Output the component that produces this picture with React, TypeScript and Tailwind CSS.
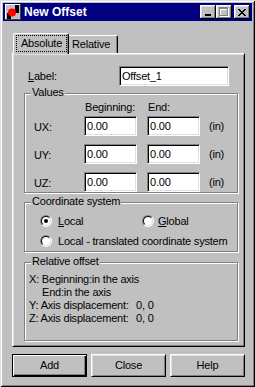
import React from "react";

function TitleBtn({ children }: { children: React.ReactNode }) {
  return (
    <div className="w-[16px] h-[14px] bg-[#c0c0c0] shadow-[inset_-1px_-1px_#000,inset_1px_1px_#fff,inset_-2px_-2px_#808080,inset_2px_2px_#dfdfdf]">
      <svg width="16" height="14" viewBox="0 0 16 14" shapeRendering="crispEdges" className="block">
        {children}
      </svg>
    </div>
  );
}

function AppIcon() {
  return (
    <svg width="16" height="16" viewBox="0 0 16 16" shapeRendering="crispEdges" className="block">
      <rect x="0" y="0" width="16" height="16" fill="#c0c0c0" />
      <rect x="0" y="0" width="16" height="1" fill="#fff" />
      <rect x="0" y="0" width="1" height="16" fill="#fff" />
      <rect x="0" y="15" width="16" height="1" fill="#404040" />
      <rect x="15" y="0" width="1" height="16" fill="#404040" />
      <rect x="10" y="1" width="4" height="8" fill="#000" />
      <rect x="2" y="9" width="4" height="6" fill="#000" />
      <circle cx="7" cy="8.5" r="4" fill="#ff0000" shapeRendering="auto" />
    </svg>
  );
}

function Field({ w, children }: { w: string; children?: React.ReactNode }) {
  return (
    <div
      className={
        "h-[20px] bg-white border border-t-[#808080] border-l-[#808080] border-r-white border-b-white shadow-[inset_1px_1px_#000,inset_-1px_-1px_#dfdfdf] flex items-center pl-[2px] " +
        w
      }
    >
      {children}
    </div>
  );
}

function Group({
  title,
  className,
  children,
}: {
  title: string;
  className: string;
  children?: React.ReactNode;
}) {
  return (
    <div className={"relative border border-[#808080] shadow-[inset_1px_1px_#fff,1px_1px_#fff] " + className}>
      <span className="absolute left-[6px] top-[-8px] bg-[#c0c0c0] px-[1px] whitespace-nowrap">{title}</span>
      {children}
    </div>
  );
}

function Radio({ checked }: { checked?: boolean }) {
  return (
    <span className="w-[12px] h-[12px] shrink-0 rounded-full border border-t-[#808080] border-l-[#808080] border-r-white border-b-white flex">
      <span className="flex-1 rounded-full border border-t-black border-l-black border-r-[#dfdfdf] border-b-[#dfdfdf] bg-white flex items-center justify-center">
        {checked && <span className="w-[4px] h-[4px] rounded-full bg-black" />}
      </span>
    </span>
  );
}

function Btn({ children, def }: { children: React.ReactNode; def?: boolean }) {
  return (
    <div
      className={
        "w-[75px] h-[23px] flex items-center justify-center pb-[1px] " +
        (def
          ? "border border-black shadow-[inset_1px_1px_#fff,inset_-1px_-1px_#000,inset_-2px_-2px_#808080]"
          : "border border-t-white border-l-white border-r-black border-b-black shadow-[inset_1px_1px_#dfdfdf,inset_-1px_-1px_#808080]")
      }
    >
      {children}
    </div>
  );
}

function ValueRow({ label, first }: { label: string; first?: boolean }) {
  return (
    <div className={"flex items-center h-[20px] pl-[9px] " + (first ? "mt-[2px]" : "mt-[8px]")}>
      <span className="w-[50px] pt-[2px]">{label}</span>
      <Field w="w-[53px]">0.00</Field>
      <div className="ml-[10px]">
        <Field w="w-[53px]">0.00</Field>
      </div>
      <span className="ml-[9px] pt-[1px]">(in)</span>
    </div>
  );
}

export default function App() {
  return (
    <div className="w-[255px] h-[387px] bg-[#c0c0c0] text-black text-[11px] leading-[13px] tracking-[-0.2px] font-['Liberation_Sans',Arial,sans-serif] p-[3px] shadow-[inset_1px_1px_#dfdfdf,inset_-1px_-1px_#000,inset_2px_2px_#fff,inset_-2px_-2px_#808080] flex flex-col">
      {/* Title bar */}
      <div className="h-[18px] bg-[#000080] flex items-center pl-[2px] pr-[2px] shrink-0">
        <AppIcon />
        <span className="ml-[3px] text-white font-bold text-[12px] tracking-normal">New Offset</span>
        <div className="ml-auto flex items-center">
          <TitleBtn>
            <rect x="5" y="9" width="6" height="2" fill="#000" />
          </TitleBtn>
          <TitleBtn>
            <g fill="#fff">
              <rect x="4" y="3" width="9" height="2" />
              <rect x="4" y="3" width="1" height="9" />
              <rect x="12" y="3" width="1" height="9" />
              <rect x="4" y="11" width="9" height="1" />
            </g>
            <g fill="#808080">
              <rect x="3" y="2" width="9" height="2" />
              <rect x="3" y="2" width="1" height="9" />
              <rect x="11" y="2" width="1" height="9" />
              <rect x="3" y="10" width="9" height="1" />
            </g>
          </TitleBtn>
          <div className="w-[2px]" />
          <TitleBtn>
            <g fill="#000">
              <rect x="4" y="4" width="2" height="1" />
              <rect x="10" y="4" width="2" height="1" />
              <rect x="5" y="5" width="2" height="1" />
              <rect x="9" y="5" width="2" height="1" />
              <rect x="6" y="6" width="4" height="1" />
              <rect x="7" y="7" width="2" height="1" />
              <rect x="6" y="8" width="4" height="1" />
              <rect x="5" y="9" width="2" height="1" />
              <rect x="9" y="9" width="2" height="1" />
              <rect x="4" y="10" width="2" height="1" />
              <rect x="10" y="10" width="2" height="1" />
            </g>
          </TitleBtn>
        </div>
      </div>

      {/* Body */}
      <div className="flex flex-col pl-[9px] pt-[12px]">
        {/* Tabs */}
        <div className="h-[20px] flex items-end ml-[1px]">
          <div className="relative z-10 w-[56px] h-[21px] -mb-[1px] bg-[#c0c0c0] rounded-t-[2px] border-l border-t border-r border-l-white border-t-white border-r-black shadow-[inset_-1px_0_#808080] pt-[1px] pl-[2px]">
            <div className="w-[51px] h-[17px] border border-dotted border-black flex items-center justify-center">
              Absolute
            </div>
          </div>
          <div className="w-[49px] h-[18px] rounded-tr-[2px] border-t border-r border-t-white border-r-black shadow-[inset_-1px_0_#808080] flex items-center pl-[3px] pb-[1px]">
            Relative
          </div>
        </div>

        {/* Panel */}
        <div className="w-[233px] h-[294px] border border-t-white border-l-white border-r-black border-b-black shadow-[inset_1px_1px_#dfdfdf,inset_-1px_-1px_#808080] flex flex-col">
          <div className="mt-[12px] ml-[15px] flex items-center h-[20px]">
            <span className="w-[91px]">
              <span className="underline">L</span>abel:
            </span>
            <Field w="w-[110px]">Offset_1</Field>
          </div>

          <Group title="Values" className="mt-[7px] ml-[11px] w-[214px] h-[100px]">
            <div className="mt-[7px] pl-[60px] flex">
              <span className="w-[63px]">Beginning:</span>
              <span>End:</span>
            </div>
            <ValueRow label="UX:" first />
            <ValueRow label="UY:" />
            <ValueRow label="UZ:" />
          </Group>

          <Group title="Coordinate system" className="mt-[9px] ml-[11px] w-[214px] h-[50px]">
            <div className="mt-[10px] flex items-center h-[16px] pl-[15px]">
              <div className="w-[102px] flex items-center">
                <Radio checked />
                <span className="ml-[6px]">
                  <span className="underline">L</span>ocal
                </span>
              </div>
              <Radio />
              <span className="ml-[4px]">
                <span className="underline">G</span>lobal
              </span>
            </div>
            <div className="mt-[4px] flex items-center h-[16px] pl-[15px]">
              <Radio />
              <span className="ml-[6px] whitespace-nowrap">Local - translated coordinate system</span>
            </div>
          </Group>

          <Group title="Relative offset" className="mt-[10px] ml-[11px] w-[214px] h-[79px]">
            <div className="pt-[10px] pl-[4px] flex flex-col whitespace-nowrap">
              <span>X: Beginning:in the axis</span>
              <span className="pl-[13px]">End:in the axis</span>
              <div className="flex">
                <span className="w-[107px]">Y: Axis displacement:</span>
                <span>0, 0</span>
              </div>
              <div className="flex">
                <span className="w-[107px]">Z: Axis displacement:</span>
                <span>0, 0</span>
              </div>
            </div>
          </Group>
        </div>

        {/* Buttons */}
        <div className="mt-[7px] flex gap-[4px]">
          <Btn def>Add</Btn>
          <Btn>Close</Btn>
          <Btn>Help</Btn>
        </div>
      </div>
    </div>
  );
}
